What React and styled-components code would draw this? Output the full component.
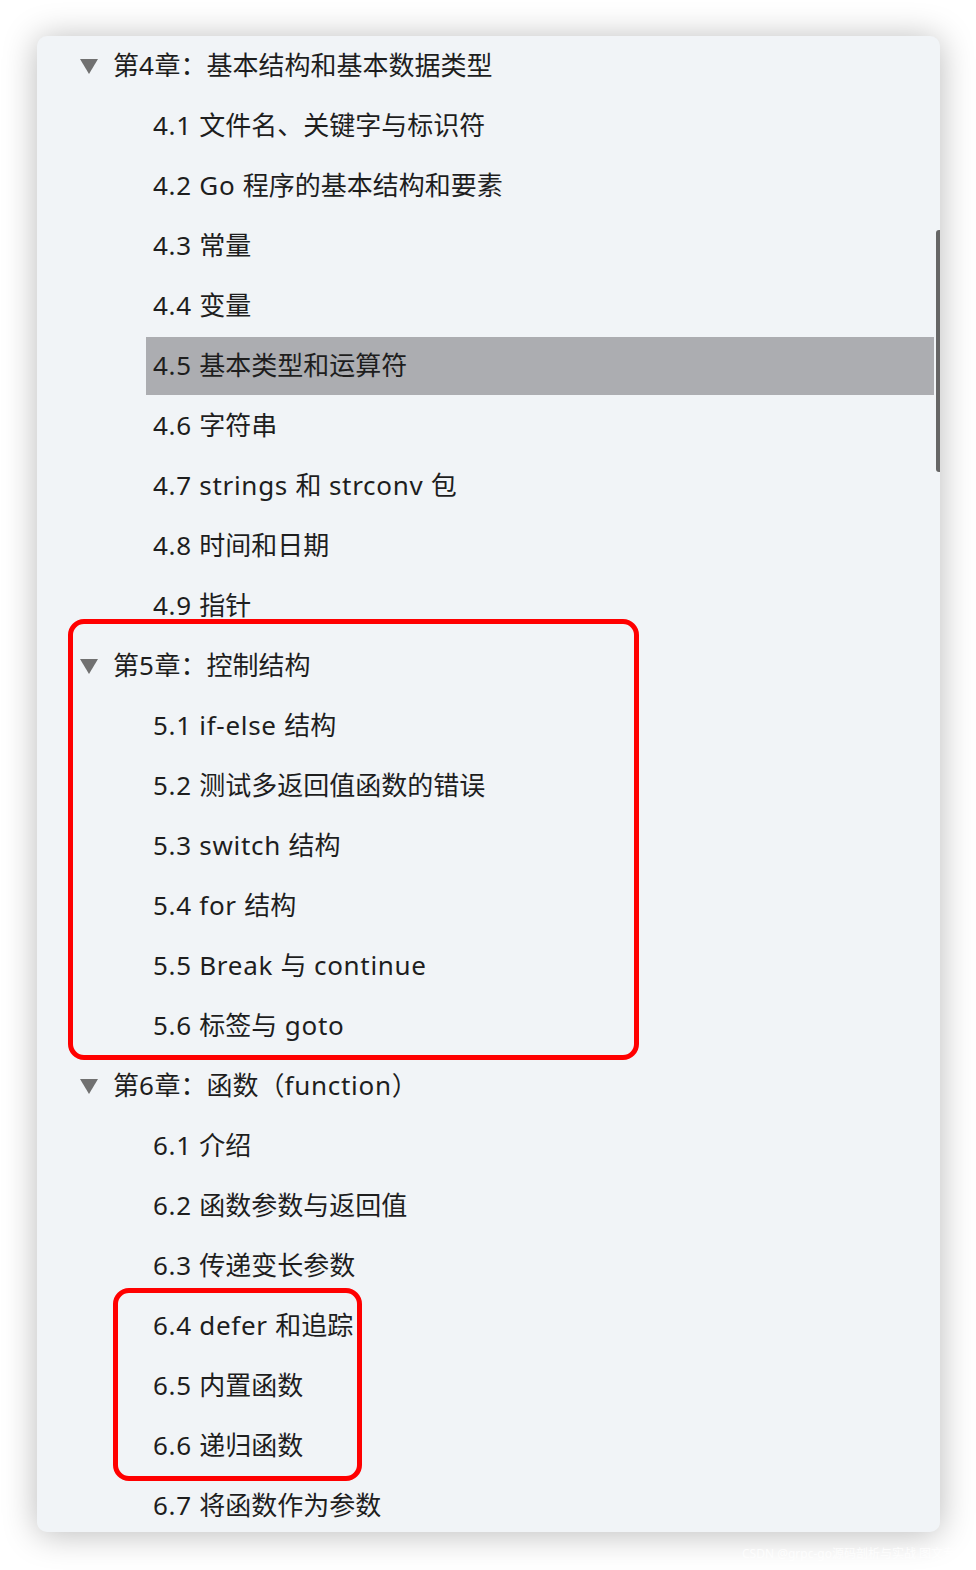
import React from "react";
import styled, { createGlobalStyle } from "styled-components";

const Global = createGlobalStyle`
  html, body { margin: 0; padding: 0; background: #ffffff; }
  body { width: 976px; height: 1570px; overflow: hidden; }
`;

const Page = styled.div`
  position: relative;
  width: 976px;
  height: 1570px;
  padding: 36px 36px 0 37px;
  box-sizing: border-box;
  background: #ffffff;
  font-family: "Noto Sans", "Noto Sans CJK SC", sans-serif;
`;

const Panel = styled.div`
  position: relative;
  height: 1496px;
  background: #f1f4f7;
  border-radius: 10px;
  box-shadow: 0 2px 34px rgba(0, 0, 0, 0.28);
  overflow: hidden;
`;

const List = styled.div`
  display: flex;
  flex-direction: column;
  margin-right: 6px;
`;

const ChapterRow = styled.div`
  display: flex;
  align-items: center;
  gap: 15px;
  height: 60px;
  padding: 0 0 4px 43px;
  box-sizing: border-box;
  color: #1e1e1e;
  font-size: 26px;
  white-space: nowrap;
`;

const ItemRow = styled.div`
  display: flex;
  align-items: center;
  height: 58px;
  margin: 1px 0 1px 109px;
  padding: 0 0 4px 7px;
  box-sizing: border-box;
  color: #1e1e1e;
  font-size: 26px;
  white-space: nowrap;
  background: ${(p) => (p.$active ? "#acadb1" : "transparent")};
`;

const Latin = styled.span`
  letter-spacing: 0.7px;
`;

const Triangle = styled.svg`
  width: 18px;
  height: 15px;
  flex: none;
  margin-top: 4px;
`;

const Scrollbar = styled.div`
  position: absolute;
  right: 0;
  top: 194px;
  width: 4px;
  height: 242px;
  background: #666666;
  border-radius: 3px 0 0 3px;
`;

const Mark = styled.div`
  position: absolute;
  left: ${(p) => p.$x}px;
  top: ${(p) => p.$y}px;
  width: ${(p) => p.$w}px;
  height: ${(p) => p.$h}px;
  box-sizing: border-box;
  border: 5px solid #ff0000;
  border-radius: 16px;
  pointer-events: none;
`;

const Watermark = styled.div`
  position: absolute;
  left: 742px;
  top: 1544px;
  font-family: "Noto Sans", "Noto Sans CJK SC", sans-serif;
  font-size: 12px;
  color: rgba(255, 255, 255, 0.8);
  white-space: nowrap;
`;

const chapters = [
  {
    title: "第4章：基本结构和基本数据类型",
    items: [
      "4.1 文件名、关键字与标识符",
      "4.2 Go 程序的基本结构和要素",
      "4.3 常量",
      "4.4 变量",
      "4.5 基本类型和运算符",
      "4.6 字符串",
      "4.7 strings 和 strconv 包",
      "4.8 时间和日期",
      "4.9 指针",
    ],
  },
  {
    title: "第5章：控制结构",
    items: [
      "5.1 if-else 结构",
      "5.2 测试多返回值函数的错误",
      "5.3 switch 结构",
      "5.4 for 结构",
      "5.5 Break 与 continue",
      "5.6 标签与 goto",
    ],
  },
  {
    title: "第6章：函数（function）",
    items: [
      "6.1 介绍",
      "6.2 函数参数与返回值",
      "6.3 传递变长参数",
      "6.4 defer 和追踪",
      "6.5 内置函数",
      "6.6 递归函数",
      "6.7 将函数作为参数",
    ],
  },
];

function Label({ text }) {
  const parts = text.split(/([\x20-\x7e]+)/).filter(Boolean);
  return (
    <span>
      {parts.map((p, i) =>
        /^[\x20-\x7e]+$/.test(p) ? <Latin key={i}>{p}</Latin> : <span key={i}>{p}</span>
      )}
    </span>
  );
}

export default function App() {
  return (
    <>
      <Global />
      <Page>
        <Panel>
          <List>
            {chapters.map((c) => (
              <React.Fragment key={c.title}>
                <ChapterRow>
                  <Triangle viewBox="0 0 18 15">
                    <path d="M0 0 H18 L9 15 Z" fill="#717171" />
                  </Triangle>
                  <Label text={c.title} />
                </ChapterRow>
                {c.items.map((it) => (
                  <ItemRow key={it} $active={it.startsWith("4.5")}>
                    <Label text={it} />
                  </ItemRow>
                ))}
              </React.Fragment>
            ))}
          </List>
          <Scrollbar />
        </Panel>
        <Mark $x={68} $y={619} $w={571} $h={441} />
        <Mark $x={113} $y={1288} $w={249} $h={193} />
        <Watermark>CSDN @grpc-go源码剖析与实战 图文专栏</Watermark>
      </Page>
    </>
  );
}
